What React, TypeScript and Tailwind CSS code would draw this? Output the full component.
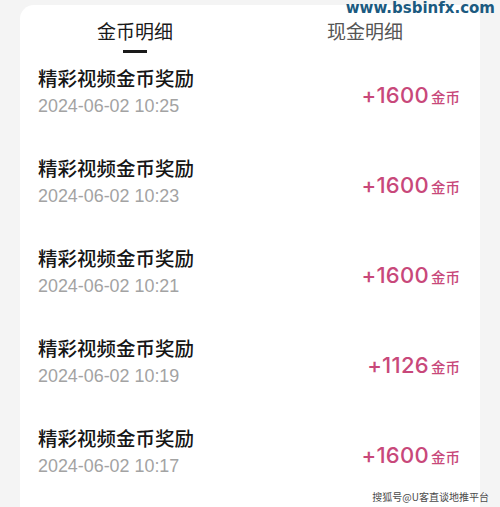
import React from "react";

const rows = [
  { time: "2024-06-02 10:25", amount: "+1600" },
  { time: "2024-06-02 10:23", amount: "+1600" },
  { time: "2024-06-02 10:21", amount: "+1600" },
  { time: "2024-06-02 10:19", amount: "+1126" },
  { time: "2024-06-02 10:17", amount: "+1600" },
];

const cjk = "font-['Noto_Sans_CJK_SC',sans-serif]";

export default function App() {
  return (
    <div className="relative w-[500px] h-[507px] overflow-hidden bg-[#f4f4f4]">
      <div className="ml-[20px] mt-[5px] w-[460px] min-h-[520px] bg-white rounded-t-[14px]">
        <div className="flex h-[48px]">
          <div className="flex-1 flex flex-col items-center pt-[14px]">
            <div className={`${cjk} text-[19px] leading-[24px] text-[#1a1a1a]`}>金币明细</div>
            <div className="mt-[7px] w-[24px] h-[3px] bg-[#1a1a1a]" />
          </div>
          <div className="flex-1 flex flex-col items-center pt-[14px]">
            <div className={`${cjk} text-[19px] leading-[24px] text-[#555555]`}>现金明细</div>
          </div>
        </div>
        {rows.map((r, i) => (
          <div key={i} className="flex justify-between h-[90px] pl-[18px] pr-[20px]">
            <div className="flex flex-col pt-[12px]">
              <div className={`${cjk} font-medium text-[19.5px] leading-[26px] text-[#161616]`}>精彩视频金币奖励</div>
              <div className="mt-[4px] font-['Liberation_Sans',sans-serif] text-[17.9px] leading-[22px] text-[#a3a3a3]">
                {r.time}
              </div>
            </div>
            <div className="mt-[28px] flex items-baseline h-[28px] text-[#c8487a]">
              <span className="font-['Inter',sans-serif] font-medium text-[22px] leading-[28px] tracking-[0.3px]">{r.amount}</span>
              <span className={`${cjk} font-medium ml-[2px] text-[14.5px] leading-[28px]`}>金币</span>
            </div>
          </div>
        ))}
      </div>
      <div className="absolute top-[0px] right-[5px] font-['DejaVu_Sans',sans-serif] font-bold text-[15px] leading-[16px] text-[#1b5a80]">
        www.bsbinfx.com
      </div>
      <div
        className={`absolute bottom-[3px] right-[11px] ${cjk} text-[10px] leading-[14px] text-[#4a4a4a] [text-shadow:0_0_2px_#ffffff,0_0_2px_#ffffff]`}
      >
        搜狐号@U客直谈地推平台
      </div>
    </div>
  );
}
